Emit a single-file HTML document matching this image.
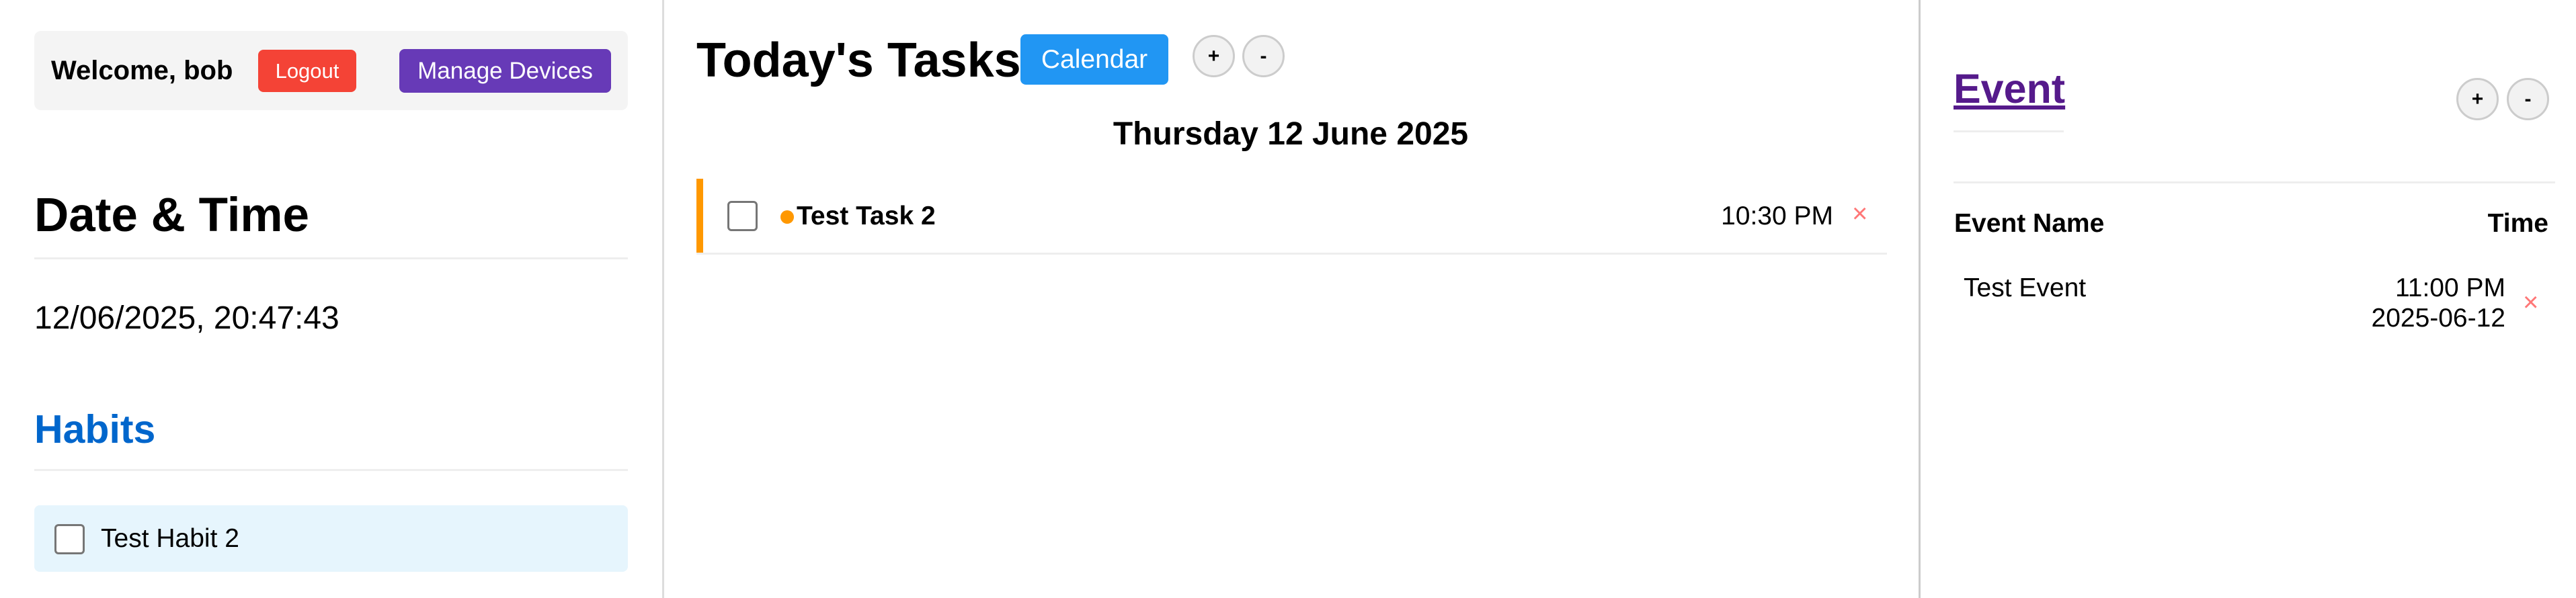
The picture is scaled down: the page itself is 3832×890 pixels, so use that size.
<!DOCTYPE html>
<html><head><meta charset="utf-8"><style>
*{margin:0;padding:0;box-sizing:border-box}
body{width:3832px;height:890px;background:#fff;position:relative;overflow:hidden;font-family:"Liberation Sans",Arial,sans-serif;color:#000}
.a{position:absolute;line-height:1;white-space:nowrap}
.b{position:absolute;display:flex;align-items:center;justify-content:center;color:#fff;line-height:1}
.hr{position:absolute;height:3px;background:#eee}
.circ{position:absolute;width:63px;height:63px;border-radius:50%;background:#f2f2f2;border:3px solid #ccc;display:flex;align-items:center;justify-content:center;font-weight:bold;font-size:30px;line-height:1}
.cb{position:absolute;width:45px;height:45px;border:3px solid #767676;border-radius:6px;background:#fff}
</style></head><body>
<div style="position:absolute;left:985px;top:0;width:3px;height:890px;background:#ddd"></div>
<div style="position:absolute;left:2854px;top:0;width:3px;height:890px;background:#ccc"></div>

<div style="position:absolute;left:51px;top:46px;width:883px;height:118px;background:#f4f4f4;border-radius:10px"></div>
<div class="a" style="left:76px;top:85px;font-size:40px;font-weight:bold">Welcome, bob</div>
<div class="b" style="left:384px;top:74px;width:146px;height:63px;background:#f44336;border-radius:8px;font-size:31px">Logout</div>
<div class="b" style="left:594px;top:73px;width:315px;height:65px;background:#673ab7;border-radius:8px;font-size:35px">Manage Devices</div>

<div class="a" style="left:51px;top:285px;font-size:71px;font-weight:bold">Date &amp; Time</div>
<div class="hr" style="left:51px;top:383px;width:883px"></div>
<div class="a" style="left:51px;top:450px;font-size:48px">12/06/2025, 20:47:43</div>
<div class="a" style="left:51px;top:610px;font-size:59px;font-weight:bold;color:#0066cc">Habits</div>
<div class="hr" style="left:51px;top:698px;width:883px"></div>
<div style="position:absolute;left:51px;top:752px;width:883px;height:99px;background:#e6f5fd;border-radius:8px"></div>
<div class="cb" style="left:81px;top:780px"></div>
<div class="a" style="left:150px;top:782px;font-size:39px">Test Habit 2</div>

<div class="a" style="left:1036px;top:54px;font-size:72px;font-weight:bold">Today's Tasks</div>
<div class="b" style="left:1518px;top:51px;width:220px;height:75px;background:#2196f3;border-radius:8px;font-size:39px">Calendar</div>
<div class="circ" style="left:1774px;top:52px">+</div>
<div class="circ" style="left:1848px;top:52px">-</div>
<div class="a" style="left:1420px;width:1000px;text-align:center;top:176px;font-size:48px;font-weight:bold">Thursday 12 June 2025</div>
<div style="position:absolute;left:1036px;top:266px;width:10px;height:111px;background:#ff9800"></div>
<div class="hr" style="left:1036px;top:376px;width:1771px"></div>
<div class="cb" style="left:1082px;top:299px"></div>
<div style="position:absolute;left:1161px;top:313px;width:20px;height:20px;border-radius:50%;background:#ff9800"></div>
<div class="a" style="left:1185px;top:302px;font-size:39px;font-weight:bold">Test Task 2</div>
<div class="a" style="left:2427px;width:300px;text-align:right;top:302px;font-size:39px">10:30 PM</div>
<div class="a" style="left:2755px;top:298px;font-size:40px;color:#f77">×</div>

<div class="a" style="left:2906px;top:102px;font-size:61px;font-weight:bold;color:#551a8b;text-decoration:underline">Event</div>
<div class="hr" style="left:2906px;top:194px;width:164px"></div>
<div class="circ" style="left:3654px;top:116px">+</div>
<div class="circ" style="left:3729px;top:116px">-</div>
<div class="hr" style="left:2906px;top:270px;width:895px"></div>
<div class="a" style="left:2907px;top:313px;font-size:39px;font-weight:bold">Event Name</div>
<div class="a" style="left:3491px;width:300px;text-align:right;top:313px;font-size:39px;font-weight:bold">Time</div>
<div class="a" style="left:2921px;top:409px;font-size:39px">Test Event</div>
<div class="a" style="left:3427px;width:300px;text-align:right;top:409px;font-size:39px">11:00 PM</div>
<div class="a" style="left:3427px;width:300px;text-align:right;top:454px;font-size:39px">2025-06-12</div>
<div class="a" style="left:3753px;top:430px;font-size:40px;color:#f77">×</div>
</body></html>
